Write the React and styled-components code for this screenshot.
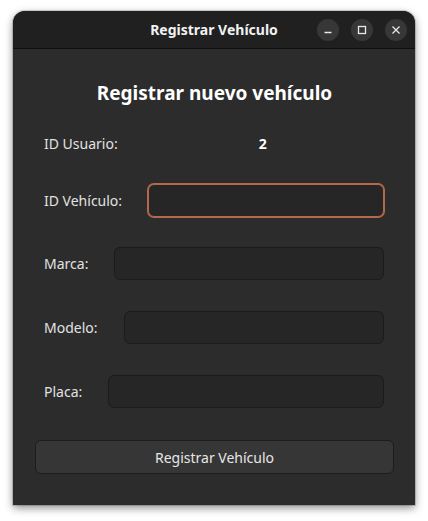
import React from 'react'
import styled, { createGlobalStyle } from 'styled-components'

const GlobalStyle = createGlobalStyle`
  html, body {
    margin: 0;
    padding: 0;
    background: #ffffff;
  }
  body {
    font-family: "Noto Sans", "DejaVu Sans", sans-serif;
  }
`

const Page = styled.div`
  padding: 11px 13px 0 13px;
  width: 428px;
  height: 521px;
  box-sizing: border-box;
`

const Window = styled.div`
  width: 402px;
  height: 494px;
  background: #2c2c2c;
  border-radius: 12px 12px 0 0;
  box-shadow: 0 3px 9px rgba(0, 0, 0, 0.45), 0 0 0 1px rgba(0, 0, 0, 0.15);
  display: flex;
  flex-direction: column;
  overflow: hidden;
`

const TitleBar = styled.div`
  height: 37px;
  flex-shrink: 0;
  background: #202020;
  border-bottom: 1px solid #0f0f0f;
  display: flex;
  align-items: center;
  justify-content: center;
  position: relative;
`

const Title = styled.span`
  color: #f2f2f2;
  font-size: 14px;
  font-weight: 700;
`

const Controls = styled.div`
  position: absolute;
  right: 8px;
  top: 8px;
  display: flex;
  gap: 12px;
`

const CtrlButton = styled.div`
  width: 22px;
  height: 22px;
  border-radius: 50%;
  background: #373737;
  display: flex;
  align-items: center;
  justify-content: center;
`

const Body = styled.div`
  flex: 1;
  display: flex;
  flex-direction: column;
  padding: 0 21px 0 22px;
`

const Heading = styled.h1`
  margin: 31px 0 0 0;
  text-align: center;
  color: #ffffff;
  font-size: 19px;
  font-weight: 700;
  line-height: 26px;
`

const Form = styled.div`
  display: flex;
  flex-direction: column;
  padding: 0 10px 0 9px;
  margin-top: 27px;
`

const Row = styled.div`
  display: flex;
  align-items: center;
  gap: 26px;
  height: ${p => p.$h || 33}px;
  margin-bottom: ${p => p.$mb ?? 31}px;
`

const Label = styled.label`
  color: #e2e2e2;
  font-size: 14px;
`

const Value = styled.span`
  flex: 1;
  text-align: center;
  color: #ffffff;
  font-weight: 700;
  font-size: 14px;
  padding-right: 2px;
`

const Input = styled.input`
  flex: 1;
  min-width: 0;
  height: 33px;
  box-sizing: border-box;
  background: #262626;
  border: 1px solid ${p => (p.$focus ? '#b4684c' : '#1b1b1b')};
  box-shadow: ${p => (p.$focus ? '0 0 0 1px #b4684c' : 'none')};
  border-radius: 6px;
  outline: none;
  color: #eee;
  font-family: inherit;
  font-size: 14px;
  padding: 0 8px;
`

const SubmitButton = styled.button`
  margin-top: 1px;
  height: 34px;
  background: #363636;
  border: 1px solid #1d1d1d;
  border-radius: 6px;
  color: #e6e6e6;
  font-family: inherit;
  font-size: 14px;
`

function MinIcon() {
  return (
    <svg width="10" height="10" viewBox="0 0 10 10">
      <path d="M1.5 7.5h7" stroke="#e8e8e8" strokeWidth="1.3" />
    </svg>
  )
}

function MaxIcon() {
  return (
    <svg width="10" height="10" viewBox="0 0 10 10">
      <rect x="1.5" y="1.5" width="7" height="7" fill="none" stroke="#e8e8e8" strokeWidth="1.3" />
    </svg>
  )
}

function CloseIcon() {
  return (
    <svg width="10" height="10" viewBox="0 0 10 10">
      <path d="M1.5 1.5l7 7M8.5 1.5l-7 7" stroke="#e8e8e8" strokeWidth="1.3" />
    </svg>
  )
}

export default function App() {
  return (
    <Page>
      <GlobalStyle />
      <Window>
        <TitleBar>
          <Title>Registrar Vehículo</Title>
          <Controls>
            <CtrlButton><MinIcon /></CtrlButton>
            <CtrlButton><MaxIcon /></CtrlButton>
            <CtrlButton><CloseIcon /></CtrlButton>
          </Controls>
        </TitleBar>
        <Body>
          <Heading>Registrar nuevo vehículo</Heading>
          <Form>
            <Row $h={20} $mb={31}>
              <Label>ID Usuario:</Label>
              <Value>2</Value>
            </Row>
            <Row $mb={30}>
              <Label>ID Vehículo:</Label>
              <Input $focus />
            </Row>
            <Row>
              <Label>Marca:</Label>
              <Input />
            </Row>
            <Row>
              <Label>Modelo:</Label>
              <Input />
            </Row>
            <Row>
              <Label>Placa:</Label>
              <Input />
            </Row>
          </Form>
          <SubmitButton>Registrar Vehículo</SubmitButton>
        </Body>
      </Window>
    </Page>
  )
}
